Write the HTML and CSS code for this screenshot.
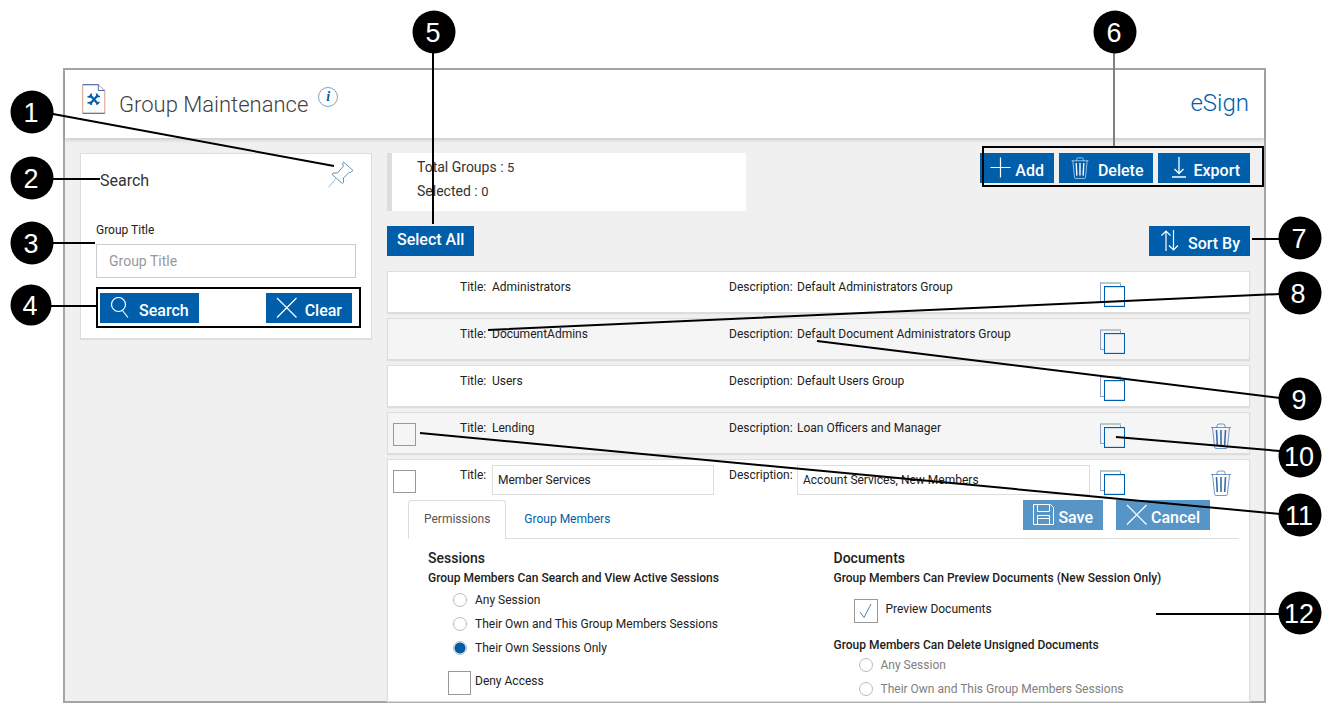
FILE: index.html
```html
<!DOCTYPE html>
<html lang="en">
<head>
<meta charset="utf-8">
<title>Group Maintenance</title>
<link rel="stylesheet" href="styles.css">
</head>
<body>
<svg class="sprite" aria-hidden="true">
  <symbol id="i-copy" viewBox="0 0 25 25"><g shape-rendering="crispEdges" fill="none"><path d="M0 1H21" stroke="#b4cbc9" stroke-width="2"/><path d="M.5 1V20.500H4M20.500 2V4" stroke="#90a0cc"/><path d="M4.500 4.500H24.500V24.500H4.500Z" stroke="#005eaa"/><path d="M5 5.500H24M5 23.500H24" stroke="#cfe0ee"/></g></symbol>
  <symbol id="i-trash" viewBox="0 0 22 26"><g fill="none" stroke="currentColor"><path d="M1 4.500H21M7 4.500V3Q7 1 9 1H13Q15 1 15 3V4.500M2.500 4.500L4.500 23.500Q4.700 25.500 6 25.500H16Q17.300 25.500 17.500 23.500L19.500 4.500" opacity=".7"/><path d="M6.500 7L7.300 22M11 7V22M15.500 7L14.700 22" stroke-width="1.600"/></g></symbol>
  <symbol id="i-x" viewBox="0 0 22 22"><path d="M1 1L20.500 20.500M20.500 1L1 20.500" fill="none" stroke="currentColor" stroke-width="1.200"/></symbol>
</svg>

<main class="app">
  <header class="header">
    <svg class="header-icon" width="24" height="30" viewBox="0 0 24 30" aria-hidden="true"><path d="M.7 29.300V.7H16.300L22.800 6.500V29.300Z" fill="#fff" stroke="#d99a86"/><path d="M16.300 .7V6.500H22.800" fill="none" stroke="#4668b0"/><path d="M.7 .7H16.300M.7 29.300H22.800" stroke="#4668b0"/><path d="M8 11L16 20M16 11L8 20" stroke="#005eaa" stroke-width="2.200"/><path d="M5.500 12.500L8 13L9.500 9.500M18 12.500L15.500 12.500L14.500 9.500M5.500 19L8.500 18.500L9.500 21M14.500 20.500L17.500 18" stroke="#005eaa" stroke-width="1.600" fill="none"/></svg>
    <h1 class="header-title">Group Maintenance</h1>
    <button class="info" type="button" aria-label="Information">i</button>
    <a class="brand" href="#">eSign</a>
  </header>

  <div class="content">
    <form class="search" onsubmit="return false">
      <div class="search-head">
        <h2 class="search-title">Search</h2>
        <button class="icon-btn" type="button" aria-label="Pin panel"><svg width="26" height="27" viewBox="0 0 26 27"><path d="M15.500 1L25 9.500L22.500 11.500L21.500 11L15.500 17V21.500L14.500 22.500L4 13.500L5 12H9.500L15.500 5L14.500 3Z" fill="none" stroke="#5f93bd"/><path d="M8.500 17L.5 26.500" stroke="#9cc0cc"/></svg></button>
      </div>
      <label class="search-label" for="group-title">Group Title</label>
      <input class="search-input" id="group-title" type="text" placeholder="Group Title">
      <div class="search-actions">
        <button class="btn" type="submit"><svg width="22" height="22" viewBox="0 0 22 22"><g fill="none" stroke="currentColor" stroke-width="1.200"><circle cx="8.500" cy="7.500" r="7"/><path d="M12.500 13.500L18 20.500"/></g></svg><span>Search</span></button>
        <button class="btn" type="reset"><svg width="22" height="22"><use href="#i-x"/></svg><span>Clear</span></button>
      </div>
    </form>

    <section class="main">
      <div class="bar">
        <div class="summary">
          <p>Total Groups : <span class="count">5</span></p>
          <p>Selected : <span class="count">0</span></p>
        </div>
        <div class="bar-actions">
          <button class="btn btn-tight" type="button"><svg width="22" height="22" viewBox="0 0 22 22"><path d="M.5 10.500H20.500M10.500 .5V20.500" stroke="currentColor" stroke-width="1.200"/></svg><span>Add</span></button>
          <button class="btn" type="button"><svg width="22" height="22"><use href="#i-trash"/></svg><span>Delete</span></button>
          <button class="btn btn-tight" type="button"><svg width="22" height="22" viewBox="0 0 22 22"><path d="M11 0V16.500M6.500 12L11 16.500L15.500 12M4 20H18" fill="none" stroke="currentColor" stroke-width="1.300"/></svg><span>Export</span></button>
        </div>
      </div>
      <div class="bar">
        <button class="btn btn-plain" type="button">Select All</button>
        <button class="btn" type="button"><svg width="22" height="22" viewBox="0 0 22 22"><path d="M7 21V1M2.500 5.500L7 1L11.500 5.500M14.500 0V20M10 15.500L14.500 20L19 15.500" fill="none" stroke="currentColor" stroke-width="1.200"/></svg><span>Sort By</span></button>
      </div>

      <div class="groups">
        <article class="group"><div class="group-row">
          <span></span>
          <p class="field"><span class="field-name title-name">Title:</span><span>Administrators</span></p>
          <p class="field"><span class="field-name desc-name">Description:</span><span>Default Administrators Group</span></p>
          <button class="icon-btn" type="button" aria-label="Copy Administrators"><svg width="25" height="25"><use href="#i-copy"/></svg></button>
        </div></article>
        <article class="group"><div class="group-row">
          <span></span>
          <p class="field"><span class="field-name title-name">Title:</span><span>DocumentAdmins</span></p>
          <p class="field"><span class="field-name desc-name">Description:</span><span>Default Document Administrators Group</span></p>
          <button class="icon-btn" type="button" aria-label="Copy DocumentAdmins"><svg width="25" height="25"><use href="#i-copy"/></svg></button>
        </div></article>
        <article class="group"><div class="group-row">
          <span></span>
          <p class="field"><span class="field-name title-name">Title:</span><span>Users</span></p>
          <p class="field"><span class="field-name desc-name">Description:</span><span>Default Users Group</span></p>
          <button class="icon-btn" type="button" aria-label="Copy Users"><svg width="25" height="25"><use href="#i-copy"/></svg></button>
        </div></article>
        <article class="group"><div class="group-row">
          <input class="check" type="checkbox" aria-label="Select Lending">
          <p class="field"><span class="field-name title-name">Title:</span><span>Lending</span></p>
          <p class="field"><span class="field-name desc-name">Description:</span><span>Loan Officers and Manager</span></p>
          <button class="icon-btn" type="button" aria-label="Copy Lending"><svg width="25" height="25"><use href="#i-copy"/></svg></button>
          <button class="icon-btn trash" type="button" aria-label="Delete Lending"><svg width="22" height="26"><use href="#i-trash"/></svg></button>
        </div></article>
        <article class="group">
          <div class="group-row">
            <input class="check" type="checkbox" aria-label="Select Member Services">
            <p class="field"><label class="field-name title-name" for="edit-title">Title:</label><input class="field-input" id="edit-title" type="text" value="Member Services"></p>
            <p class="field"><label class="field-name desc-name" for="edit-desc">Description:</label><input class="field-input" id="edit-desc" type="text" value="Account Services, New Members"></p>
            <button class="icon-btn" type="button" aria-label="Copy Member Services"><svg width="25" height="25"><use href="#i-copy"/></svg></button>
            <button class="icon-btn trash" type="button" aria-label="Delete Member Services"><svg width="22" height="26"><use href="#i-trash"/></svg></button>
          </div>
          <div class="tabs">
            <a class="tab tab-active" href="#permissions">Permissions</a>
            <a class="tab" href="#members">Group Members</a>
            <div class="tab-actions">
              <button class="btn btn-tight" type="button" disabled><svg width="22" height="22" viewBox="0 0 22 22"><path d="M.5 .5H17.500L20.500 3.500V20.500H.5ZM4.500 .5V7.500H16.500V.5M4.500 20.500V11.500H16.500V20.500M4.500 14.500H16.500" fill="none" stroke="currentColor"/></svg><span>Save</span></button>
              <button class="btn btn-tight" type="button" disabled><svg width="22" height="22"><use href="#i-x"/></svg><span>Cancel</span></button>
            </div>
          </div>
          <div class="panel" id="permissions">
            <section>
              <h3>Sessions</h3>
              <h4>Group Members Can Search and View Active Sessions</h4>
              <label class="option"><input class="radio" type="radio" name="view"><span>Any Session</span></label>
              <label class="option"><input class="radio" type="radio" name="view"><span>Their Own and This Group Members Sessions</span></label>
              <label class="option"><input class="radio" type="radio" name="view" checked><span>Their Own Sessions Only</span></label>
              <label class="box-option box-tight"><input class="check" type="checkbox"><span>Deny Access</span></label>
            </section>
            <section>
              <h3>Documents</h3>
              <h4>Group Members Can Preview Documents (New Session Only)</h4>
              <label class="box-option"><span class="ticked"><input class="check" type="checkbox" checked><svg class="tick" width="14" height="16" viewBox="0 0 14 16"><path d="M1 9L5 14.500L12 1" fill="none" stroke="#4f86b5"/></svg></span><span>Preview Documents</span></label>
              <h4>Group Members Can Delete Unsigned Documents</h4>
              <label class="option off"><input class="radio" type="radio" name="delete" disabled><span>Any Session</span></label>
              <label class="option off"><input class="radio" type="radio" name="delete" disabled><span>Their Own and This Group Members Sessions</span></label>
            </section>
          </div>
        </article>
      </div>
    </section>
  </div>
</main>

<svg class="callouts" width="1333" height="703" viewBox="0 0 1333 703">
  <g fill="none" stroke="#000" stroke-width="2">
    <path d="M53 114L334 166M53 179H100M53 243H95M50 306H97M433 53V224M1252 239H1280M488 330L1280 294M817 341L1280 398M1116 437L1280 451M420 433L1280 514M1156 614H1280"/>
    <path d="M1114 53V147" stroke="#7f7f7f"/>
    <rect x="97" y="288" width="263" height="39"/>
    <rect x="983" y="147" width="280" height="39"/>
  </g>
  <g>
    <circle cx="32" cy="112" r="21.500"/><circle cx="32" cy="178" r="21.500"/><circle cx="32" cy="243" r="21.500"/><circle cx="31" cy="305" r="20.500"/>
    <circle cx="434" cy="32" r="21.500"/><circle cx="1115" cy="32" r="21.500"/>
    <circle cx="1300" cy="238" r="21.500"/><circle cx="1300" cy="293" r="21.500"/><circle cx="1300" cy="399" r="21.500"/><circle cx="1300" cy="456" r="21.500"/><circle cx="1300" cy="515" r="21.500"/><circle cx="1300" cy="613" r="21.500"/>
  </g>
  <g class="callout-number">
    <text x="31" y="122">1</text><text x="31" y="188">2</text><text x="31" y="253">3</text><text x="30" y="315">4</text>
    <text x="433" y="42">5</text><text x="1114" y="42">6</text>
    <text x="1299" y="248">7</text><text x="1298" y="303">8</text><text x="1299" y="409">9</text><text x="1299" y="466">10</text><text x="1299" y="525">11</text><text x="1299" y="623">12</text>
  </g>
</svg>
</body>
</html>
```

FILE: styles.css
```css
* { box-sizing: border-box; }

body {
  margin: 0;
  min-height: 100vh;
  display: flex;
  flex-direction: column;
  padding: 68px 67px 0 63px;
  background: #fff;
  color: #212121;
  font: 12px/20px Roboto, "Liberation Sans", sans-serif;
}

h1, h2, h3, h4, p { margin: 0; }
a { text-decoration: none; }
button, input { font-family: inherit; }
.sprite { position: absolute; width: 0; height: 0; }

.app {
  flex: 1;
  display: flex;
  flex-direction: column;
  border: 2px solid #a6a6a6;
  background: #f0f0f0;
}

.header {
  display: flex;
  align-items: flex-start;
  padding: 14px 15px 0 17px;
  height: 68px;
  background: #fff;
  box-shadow: 0 2px 4px rgba(0, 0, 0, 0.16);
}
.header-icon { flex: none; }
.header-title {
  margin: 6px 10px 0 13px;
  font-size: 22px;
  line-height: 30px;
  font-weight: 300;
  color: #424242;
}
.info {
  width: 20px;
  height: 20px;
  margin-top: 3px;
  padding: 0;
  border: 1px solid #7f9fc4;
  border-radius: 50%;
  background: #fff;
  color: #005eaa;
  font: italic bold 14px/18px "Liberation Serif", serif;
}
.brand {
  margin: 4px 0 0 auto;
  font-size: 24px;
  line-height: 30px;
  font-weight: 300;
  color: #005eaa;
}

.content {
  flex: 1;
  display: flex;
  gap: 15px;
  padding: 15px 14px 0 15px;
}

.search {
  flex: none;
  align-self: flex-start;
  width: 292px;
  padding: 7px 15px 15px;
  border: 1px solid #ddd;
  border-bottom-width: 2px;
  background: #fff;
}
.search-head {
  display: flex;
  justify-content: space-between;
  padding: 0 2px 0 4px;
}
.search-title {
  margin-top: 10px;
  font-size: 16px;
  line-height: 20px;
  font-weight: 400;
  color: #333;
}
.search-label { display: block; margin-top: 29px; }
.search-input {
  display: block;
  width: 260px;
  height: 34px;
  margin-top: 4px;
  padding: 0 12px;
  border: 1px solid #ccc;
  font-size: 14px;
}
.search-input::placeholder { color: #999; }
.search-actions {
  display: flex;
  justify-content: space-between;
  padding: 15px 4px 0;
}

.btn {
  display: flex;
  align-items: flex-end;
  gap: 7px;
  height: 30px;
  padding: 4px 10px 2px;
  border: 0;
  background: #005eaa;
  color: #fff;
  font-size: 16px;
  line-height: 20px;
  font-weight: 500;
}
.btn svg { align-self: flex-start; }
.btn-tight { gap: 3px; }
.btn-plain { align-items: flex-start; }
.btn:disabled { opacity: 0.65; }

.icon-btn {
  display: flex;
  align-items: flex-start;
  padding: 0;
  border: 0;
  background: none;
}

.main {
  flex: 1;
  min-width: 0;
  display: flex;
  flex-direction: column;
  gap: 15px;
}
.bar { display: flex; justify-content: space-between; align-items: flex-start; }
.bar-actions { display: flex; gap: 5px; }
.summary {
  width: 359px;
  padding: 2px 25px 8px;
  border-left: 5px solid #ddd;
  background: #fff;
  color: #333;
  font-size: 14px;
  line-height: 24px;
}
.summary p { height: 24px; }
.count { font-size: 13px; }

.groups { flex: 1; display: flex; flex-direction: column; gap: 5px; }
.group {
  border: 1px solid #ddd;
  background: #fff;
  box-shadow: 0 1px 1px #ddd;
}
.group:nth-child(even) { background: #f5f5f5; }
.group:last-child { flex: 1; border-bottom: 0; }
.group-row {
  display: grid;
  grid-template-columns: 72px 269fr 371fr 110px 39px;
  align-items: start;
  height: 40px;
}
.group-row .check { margin: 10px 0 0 5px; }
.group-row .icon-btn { margin-top: 10px; }
.trash { color: #3a6cab; }
.field { display: flex; padding-top: 5px; }
.field-name { flex: none; }
.title-name { width: 32px; }
.desc-name { width: 68px; }
.field-input {
  flex: 1;
  min-width: 0;
  height: 30px;
  margin-right: 10px;
  padding: 0 5px;
  border: 1px solid #ddd;
  color: #212121;
  font-size: 12px;
}
#edit-title { margin-right: 15px; }

.check {
  appearance: none;
  flex: none;
  display: block;
  width: 23px;
  height: 23px;
  margin: 0;
  border: 1px solid #999;
}
.radio {
  appearance: none;
  flex: none;
  width: 14px;
  height: 14px;
  margin: 0;
  border: 1px solid #bbb;
  border-radius: 50%;
  background: #fff;
}
.radio:checked { background: radial-gradient(circle, #005eaa 5px, #fff 6px); }

.tabs {
  display: flex;
  gap: 2px;
  margin: 0 10px 0 20px;
  border-bottom: 1px solid #ddd;
}
.tab {
  padding: 8px 15px 10px;
  margin-bottom: -1px;
  border: 1px solid transparent;
  border-bottom: 0;
  color: #005eaa;
}
.tab-active {
  border-color: #ddd;
  border-radius: 4px 4px 0 0;
  background: #fff;
  color: #555;
}
.tab-actions { display: flex; gap: 13px; margin: 0 29px 0 auto; }

.panel {
  display: grid;
  grid-template-columns: 1fr 1fr;
  margin: 0 10px 0 20px;
  padding: 9px 0 0 20px;
}
.panel h3 { font-size: 14px; line-height: 20px; font-weight: 500; }
.panel h4 { font-size: 12px; line-height: 20px; font-weight: 500; }
.panel .box-option + h4 { margin-bottom: -2px; }
.option {
  display: flex;
  align-items: center;
  gap: 8px;
  height: 24px;
  padding-left: 25px;
}
.off { color: #808080; }
.box-option {
  display: flex;
  gap: 8px;
  margin: 11px 0 12px;
  padding-left: 20px;
}
.box-tight { gap: 4px; margin-bottom: 0; }
.box-option .check { height: 24px; }
.ticked { display: grid; place-items: center; }
.ticked > * { grid-area: 1 / 1; }
.ticked .check { width: 24px; }

.callouts {
  position: absolute;
  top: 0;
  left: 0;
  pointer-events: none;
}
.callout-number {
  fill: #fff;
  font: 27px "Liberation Sans", Arial, sans-serif;
  text-anchor: middle;
}
```
